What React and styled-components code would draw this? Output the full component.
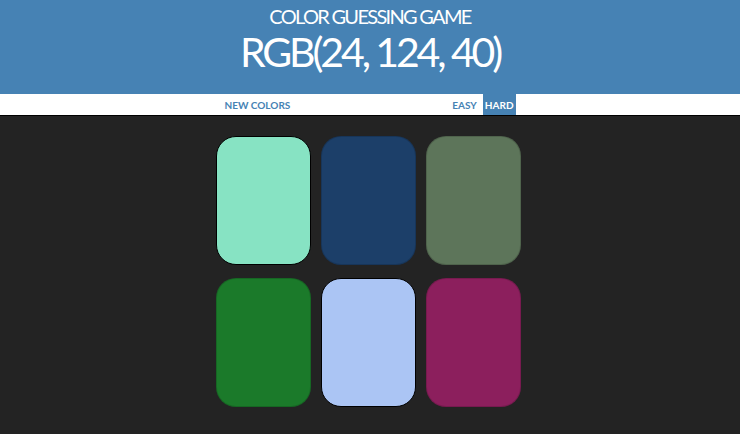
import React, { useState } from "react";
import styled, { createGlobalStyle } from "styled-components";

const GlobalStyle = createGlobalStyle`
  body {
    margin: 0;
    background: #232323;
    font-family: "Lato", "Liberation Sans", sans-serif;
  }
`;

// header
const Header = styled.header`
  background: #4682b4;
  color: #fff;
  text-align: center;
  height: 94px;
  box-sizing: border-box;
  padding-top: 4px;
`;

const Title = styled.h1`
  margin: 0;
  font-size: 20px;
  font-weight: 400;
  line-height: 24px;
  letter-spacing: -1.7px;
  text-transform: uppercase;
`;

const Target = styled.div`
  font-size: 41px;
  font-weight: 400;
  line-height: 48px;
  letter-spacing: -3.1px;
`;

// stripe
const Stripe = styled.nav`
  background: #fff;
  height: 21px;
  border-bottom: 1px solid #000;
  display: flex;
  justify-content: center;
  align-items: stretch;
  padding-right: 2px;
`;

const NavButton = styled.button`
  border: none;
  background: ${(p) => (p.selected ? "#4682b4" : "none")};
  color: ${(p) => (p.selected ? "#fff" : "#4682b4")};
  font-family: inherit;
  font-weight: 700;
  font-size: 10px;
  letter-spacing: 0;
  text-transform: uppercase;
  padding: 0 2px;
  margin: 0 2px;
  height: 100%;
  cursor: pointer;
  outline: none;
`;

const Message = styled.span`
  display: inline-block;
  width: 154px;
`;

// squares
const Board = styled.div`
  display: grid;
  grid-template-columns: repeat(3, 95px);
  column-gap: 10px;
  row-gap: 13px;
  justify-content: center;
  padding: 20px 4px 0 0;
`;

const Square = styled.div`
  height: 129px;
  border-radius: 20px;
  box-sizing: border-box;
  background: ${(p) => p.color};
  border: 1px solid ${(p) => (p.outlined ? "#000" : "rgba(0,0,0,0.15)")};
  cursor: pointer;
`;

const colors = [
  { c: "#87e3c3", outlined: true },
  { c: "#1c3f69" },
  { c: "#5d755a" },
  { c: "#1b7a2a" },
  { c: "#abc5f4", outlined: true },
  { c: "#8c1f5d" },
];

export default function App() {
  const [hard, setHard] = useState(true);

  return (
    <>
      <GlobalStyle />
      <Header>
        <Title>Color Guessing Game</Title>
        <Target>RGB(24, 124, 40)</Target>
      </Header>
      <Stripe>
        <NavButton>New Colors</NavButton>
        <Message />
        <NavButton selected={!hard} onClick={() => setHard(false)}>
          Easy
        </NavButton>
        <NavButton selected={hard} onClick={() => setHard(true)}>
          Hard
        </NavButton>
      </Stripe>
      <Board>
        {colors.map((sq, idx) => (
          <Square key={idx} color={sq.c} outlined={sq.outlined} />
        ))}
      </Board>
    </>
  );
}
